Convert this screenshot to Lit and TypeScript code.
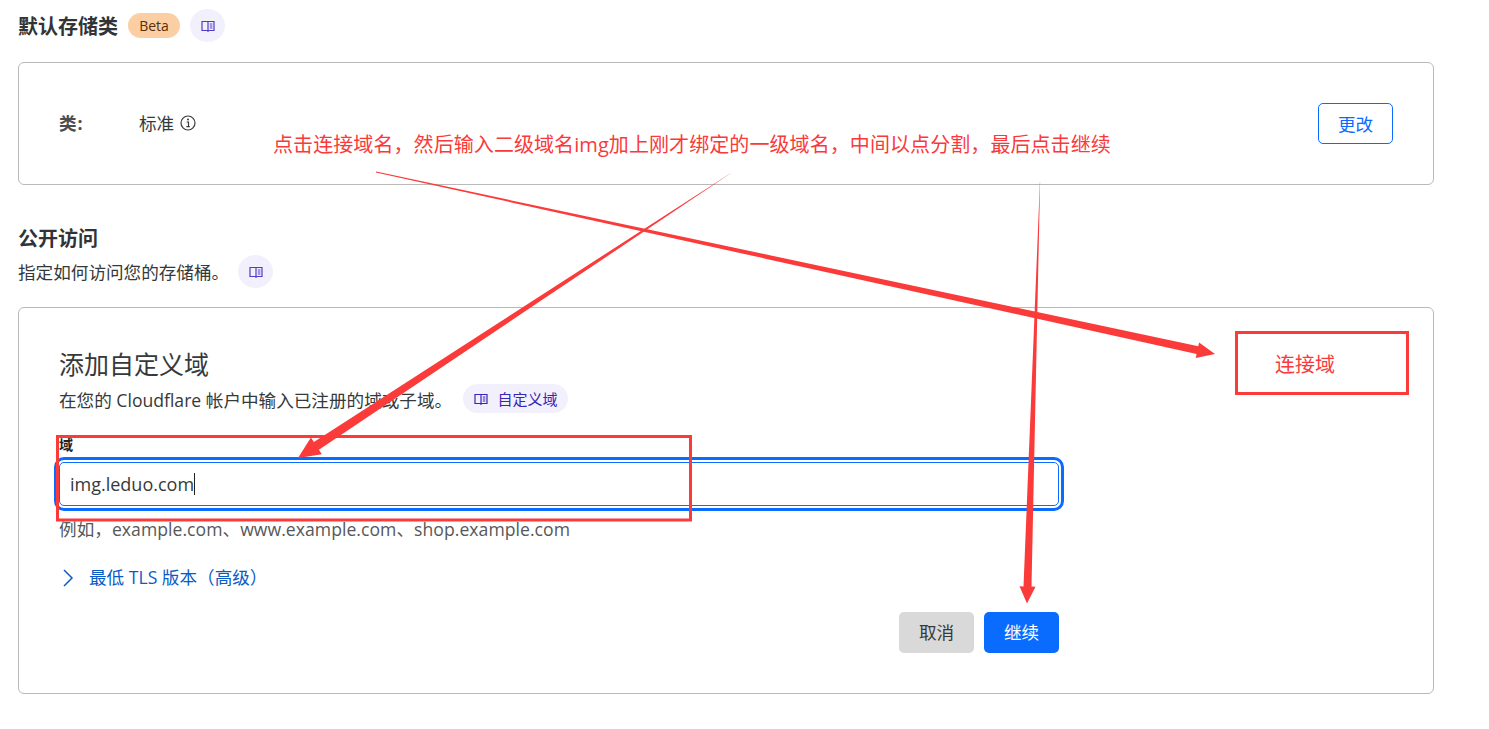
import { LitElement, html, css, svg } from "lit";
import { customElement } from "lit/decorators.js";

function taper(x1: number, y1: number, x2: number, y2: number, w1: number, w2: number, headLen: number, headW: number) {
  const dx = x2 - x1, dy = y2 - y1, L = Math.hypot(dx, dy);
  const ux = dx / L, uy = dy / L, nx = -uy, ny = ux;
  const bx = x2 - ux * headLen, by = y2 - uy * headLen;
  const p = (x: number, y: number) => `${x.toFixed(1)},${y.toFixed(1)}`;
  return [
    p(x1 + nx * w1 / 2, y1 + ny * w1 / 2),
    p(bx + nx * w2 / 2, by + ny * w2 / 2),
    p(bx + nx * headW / 2, by + ny * headW / 2),
    p(x2, y2),
    p(bx - nx * headW / 2, by - ny * headW / 2),
    p(bx - nx * w2 / 2, by - ny * w2 / 2),
    p(x1 - nx * w1 / 2, y1 - ny * w1 / 2),
  ].join(" ");
}

const book = svg`<path d="M1 2.5h12v9H1zM7 2.5v10.5" fill="none" stroke="currentColor" stroke-width="1.2"/><path d="M8.8 5h2.6M8.8 7h2.6M8.8 9h2.6" stroke="currentColor" stroke-width="1"/>`;

const COMMA = "\uFF0C";
const LP = "\uFF08";
const RP = "\uFF09";
const NOTE = `点击连接域名${COMMA}然后输入二级域名img加上刚才绑定的一级域名${COMMA}中间以点分割${COMMA}最后点击继续`;
const HINT = `例如${COMMA}example.com、www.example.com、shop.example.com`;
const TLS = `最低 TLS 版本${LP}高级${RP}`;

@customElement("app-root")
export class AppRoot extends LitElement {
  static styles = css`
    :host {
      display: block;
      position: relative;
      width: 1489px;
      height: 729px;
      overflow: hidden;
      background: #fff;
      color: #36393a;
      font-family: "Open Sans", "Noto Sans CJK SC", sans-serif;
      font-size: 17.6px;
    }
    .page {
      display: flex;
      flex-direction: column;
      width: 1416px;
      margin-left: 18px;
      padding-top: 9px;
    }
    .head {
      display: flex;
      align-items: center;
      height: 33px;
    }
    h2 {
      margin: 0;
      font-size: 20px;
      font-weight: 700;
      line-height: 33px;
      color: #313436;
    }
    .title { margin-top: 2px; }
    .beta {
      margin-left: 10px;
      width: 52px;
      height: 25px;
      border-radius: 13px;
      background: #fbcfa3;
      color: #5a2d06;
      font-size: 14px;
      line-height: 25px;
      text-align: center;
    }
    .docs {
      margin-left: 10px;
      width: 35px;
      height: 33px;
      border-radius: 50%;
      background: #f2f0fc;
      color: #4f3fc4;
      display: flex;
      align-items: center;
      justify-content: center;
    }
    .docs svg, .chip svg { width: 14px; height: 14px; }
    .card {
      border: 1px solid #b9b9b9;
      border-radius: 6px;
      box-sizing: border-box;
    }
    .card1 {
      margin-top: 20px;
      height: 123px;
      display: flex;
      align-items: center;
      padding: 0 40px 2px;
    }
    .k { width: 80px; font-weight: 700; color: #4a4d4f; letter-spacing: 1px; }
    .v { display: flex; align-items: center; gap: 6px; flex: 1; }
    .v svg { width: 16px; height: 16px; }
    .change {
      width: 75px;
      height: 41px;
      margin-top: 2px;
      box-sizing: border-box;
      border: 1px solid #0a6cff;
      border-radius: 5px;
      background: #fff;
      color: #0a6cff;
      font: inherit;
      padding: 0;
    }
    .sec { margin-top: 37px; }
    .desc { display: flex; align-items: center; height: 33px; }
    .desc .docs { margin-left: 9px; }
    .card2 {
      margin-top: 19px;
      height: 387px;
      padding: 39px 40px 0;
      display: flex;
      flex-direction: column;
    }
    h3 {
      margin: 0;
      font-size: 25px;
      font-weight: 400;
      line-height: 34px;
      color: #36393a;
    }
    .sub { display: flex; align-items: center; height: 30px; margin-top: 3px; }
    .chip {
      align-self: flex-start;
      margin-left: 11px;
      height: 29px;
      width: 105px;
      border-radius: 15px;
      background: #f2f0fc;
      color: #3a23b8;
      font-size: 15px;
      display: flex;
      align-items: center;
      justify-content: center;
      gap: 10px;
    }
    .label { margin-top: 22px; font-size: 14px; font-weight: 700; line-height: 18px; height: 18px; color: #222; }
    .input {
      box-sizing: border-box;
      margin-top: 8px;
      width: 1000px;
      height: 44px;
      border: 1px solid #0a6cff;
      border-radius: 5px;
      outline: 3px solid #0a6cff;
      outline-offset: 2px;
      padding-left: 10px;
      display: flex;
      align-items: center;
      font-size: 18px;
      color: #36393a;
    }
    .caret { width: 1px; height: 22px; background: #222; margin-left: 0; }
    .hint { margin-top: 11px; line-height: 25px; color: #55585a; white-space: nowrap; letter-spacing: 0.04px; }
    .tls {
      margin-top: 23px;
      display: flex;
      align-items: center;
      gap: 14px;
      line-height: 25px;
      color: #0a5cc5;
    }
    .tls svg { width: 16px; height: 18px; }
    .actions { display: flex; gap: 10px; margin-top: 22px; margin-left: 840px; }
    .btn {
      width: 75px;
      height: 41px;
      border: 0;
      border-radius: 5px;
      font: inherit;
      padding: 0 0 2px;
    }
    .cancel { background: #d9d9d9; color: #36393a; }
    .go { background: #0a6cff; color: #fff; }
    .overlay { position: absolute; left: 0; top: 0; width: 1489px; height: 729px; pointer-events: none; }
    .note { position: absolute; color: #fa3a3a; font-size: 20px; line-height: 26px; white-space: nowrap; }
    .note1 { left: 273px; top: 132px; letter-spacing: 0.08px; }
    .note2 { left: 1275px; top: 352px; }
  `;

  render() {
    const red = "#fb3a3a";
    return html`
      <div class="page">
        <div class="head">
          <h2 class="title">默认存储类</h2>
          <span class="beta">Beta</span>
          <span class="docs"><svg viewBox="0 0 14 14">${book}</svg></span>
        </div>
        <div class="card card1">
          <span class="k">类:</span>
          <span class="v">标准
            <svg viewBox="0 0 16 16"><circle cx="8" cy="8" r="7" fill="none" stroke="currentColor" stroke-width="1.2"/><circle cx="8" cy="4.6" r="1" fill="currentColor"/><path d="M6.6 7h1.9v4.4M6.4 11.6h3.4" fill="none" stroke="currentColor" stroke-width="1.2"/></svg>
          </span>
          <button class="change">更改</button>
        </div>
        <h2 class="sec">公开访问</h2>
        <div class="desc">指定如何访问您的存储桶。<span class="docs"><svg viewBox="0 0 14 14">${book}</svg></span></div>
        <div class="card card2">
          <h3>添加自定义域</h3>
          <div class="sub">在您的 Cloudflare 帐户中输入已注册的域或子域。
            <span class="chip"><svg viewBox="0 0 14 14">${book}</svg>自定义域</span>
          </div>
          <div class="label">域</div>
          <div class="input">img.leduo.com<span class="caret"></span></div>
          <div class="hint">${HINT}</div>
          <div class="tls">
            <svg viewBox="0 0 16 18"><path d="M5 1 13 9 5 17" fill="none" stroke="currentColor" stroke-width="1.5"/></svg>
            ${TLS}
          </div>
          <div class="actions">
            <button class="btn cancel">取消</button>
            <button class="btn go">继续</button>
          </div>
        </div>
      </div>
      <svg class="overlay" viewBox="0 0 1489 729">
        <rect x="57.5" y="436.5" width="633" height="83.5" fill="none" stroke=${red} stroke-width="3"/>
        <rect x="1236.5" y="332.5" width="171" height="61" fill="none" stroke=${red} stroke-width="3"/>
        <polygon fill=${red} points=${taper(376, 172, 1215, 354, 0.8, 8, 18, 16)}></polygon>
        <polygon fill=${red} points=${taper(731, 173, 298, 458, 0.3, 9, 22, 20)}></polygon>
        <polygon fill=${red} points=${taper(1040, 182, 1027, 603.5, 0.3, 8, 17, 16)}></polygon>
      </svg>
      <div class="note note1">${NOTE}</div>
      <div class="note note2">连接域</div>
    `;
  }
}
